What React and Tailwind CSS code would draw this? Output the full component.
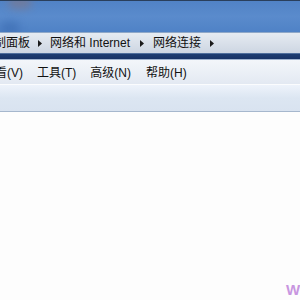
import React from "react";

const Arrow = () => (
  <svg width="4" height="7" viewBox="0 0 4 7" className="shrink-0 block">
    <path d="M0 0 L4 3.5 L0 7 Z" fill="#1a1a1a" />
  </svg>
);

export default function App() {
  return (
    <div
      className="w-[300px] h-[300px] overflow-hidden bg-[#fdfdfd] relative flex flex-col"
      style={{ fontFamily: '"Liberation Sans", "Noto Sans CJK SC", sans-serif' }}
    >
      {/* title glass */}
      <div className="h-[32px] shrink-0 border-t border-[#2a3f5c] bg-gradient-to-b from-[#5183c6] via-[#5a8bcc] to-[#4f82c6] relative overflow-hidden">
        <div className="absolute left-[8px] top-[-6px] w-[24px] h-[14px] rounded-full bg-[#9a6f63] opacity-40 blur-[4px]" />
        <div className="absolute left-[0px] top-[20px] w-[20px] h-[14px] rounded-full bg-[#3a6ab0] opacity-60 blur-[4px]" />
      </div>

      {/* address bar */}
      <div className="h-[21px] shrink-0 border-t border-[#8fa8c8] bg-gradient-to-b from-[#e6ebf2] to-[#cdd6e2] flex items-center text-[12px] text-[#111] whitespace-nowrap">
        <span className="ml-[-18px]">控制面板</span>
        <span className="ml-[8px] mr-[8px]"><Arrow /></span>
        <span>网络和 Internet</span>
        <span className="ml-[10px] mr-[9px]"><Arrow /></span>
        <span>网络连接</span>
        <span className="ml-[9px]"><Arrow /></span>
      </div>

      {/* dark strip */}
      <div className="h-[6px] shrink-0 border-t border-[#4f6e9c] bg-gradient-to-b from-[#1d3d72] to-[#173265]" />

      {/* menu bar */}
      <div className="h-[25px] shrink-0 border-t border-[#9fb3cf] bg-gradient-to-b from-[#f3f6fa] to-[#e3e9f2] flex items-center pt-[2px] text-[12px] text-[#111] whitespace-nowrap">
        <span className="ml-[-17px]">查看(V)</span>
        <span className="ml-[14px]">工具(T)</span>
        <span className="ml-[14px]">高级(N)</span>
        <span className="ml-[15px]">帮助(H)</span>
      </div>

      {/* toolbar */}
      <div className="h-[28px] shrink-0 border-t border-[#fbfcfe] border-b border-b-[#a6b7cd] bg-gradient-to-b from-[#eef3fb] via-[#dce6f2] to-[#d9e3f0]" />

      <div className="flex-1 bg-[#fdfdfd]" />

      <div className="absolute left-[286px] top-[279px] text-[15px] font-bold text-[#c896e0]">
        W
      </div>
    </div>
  );
}
